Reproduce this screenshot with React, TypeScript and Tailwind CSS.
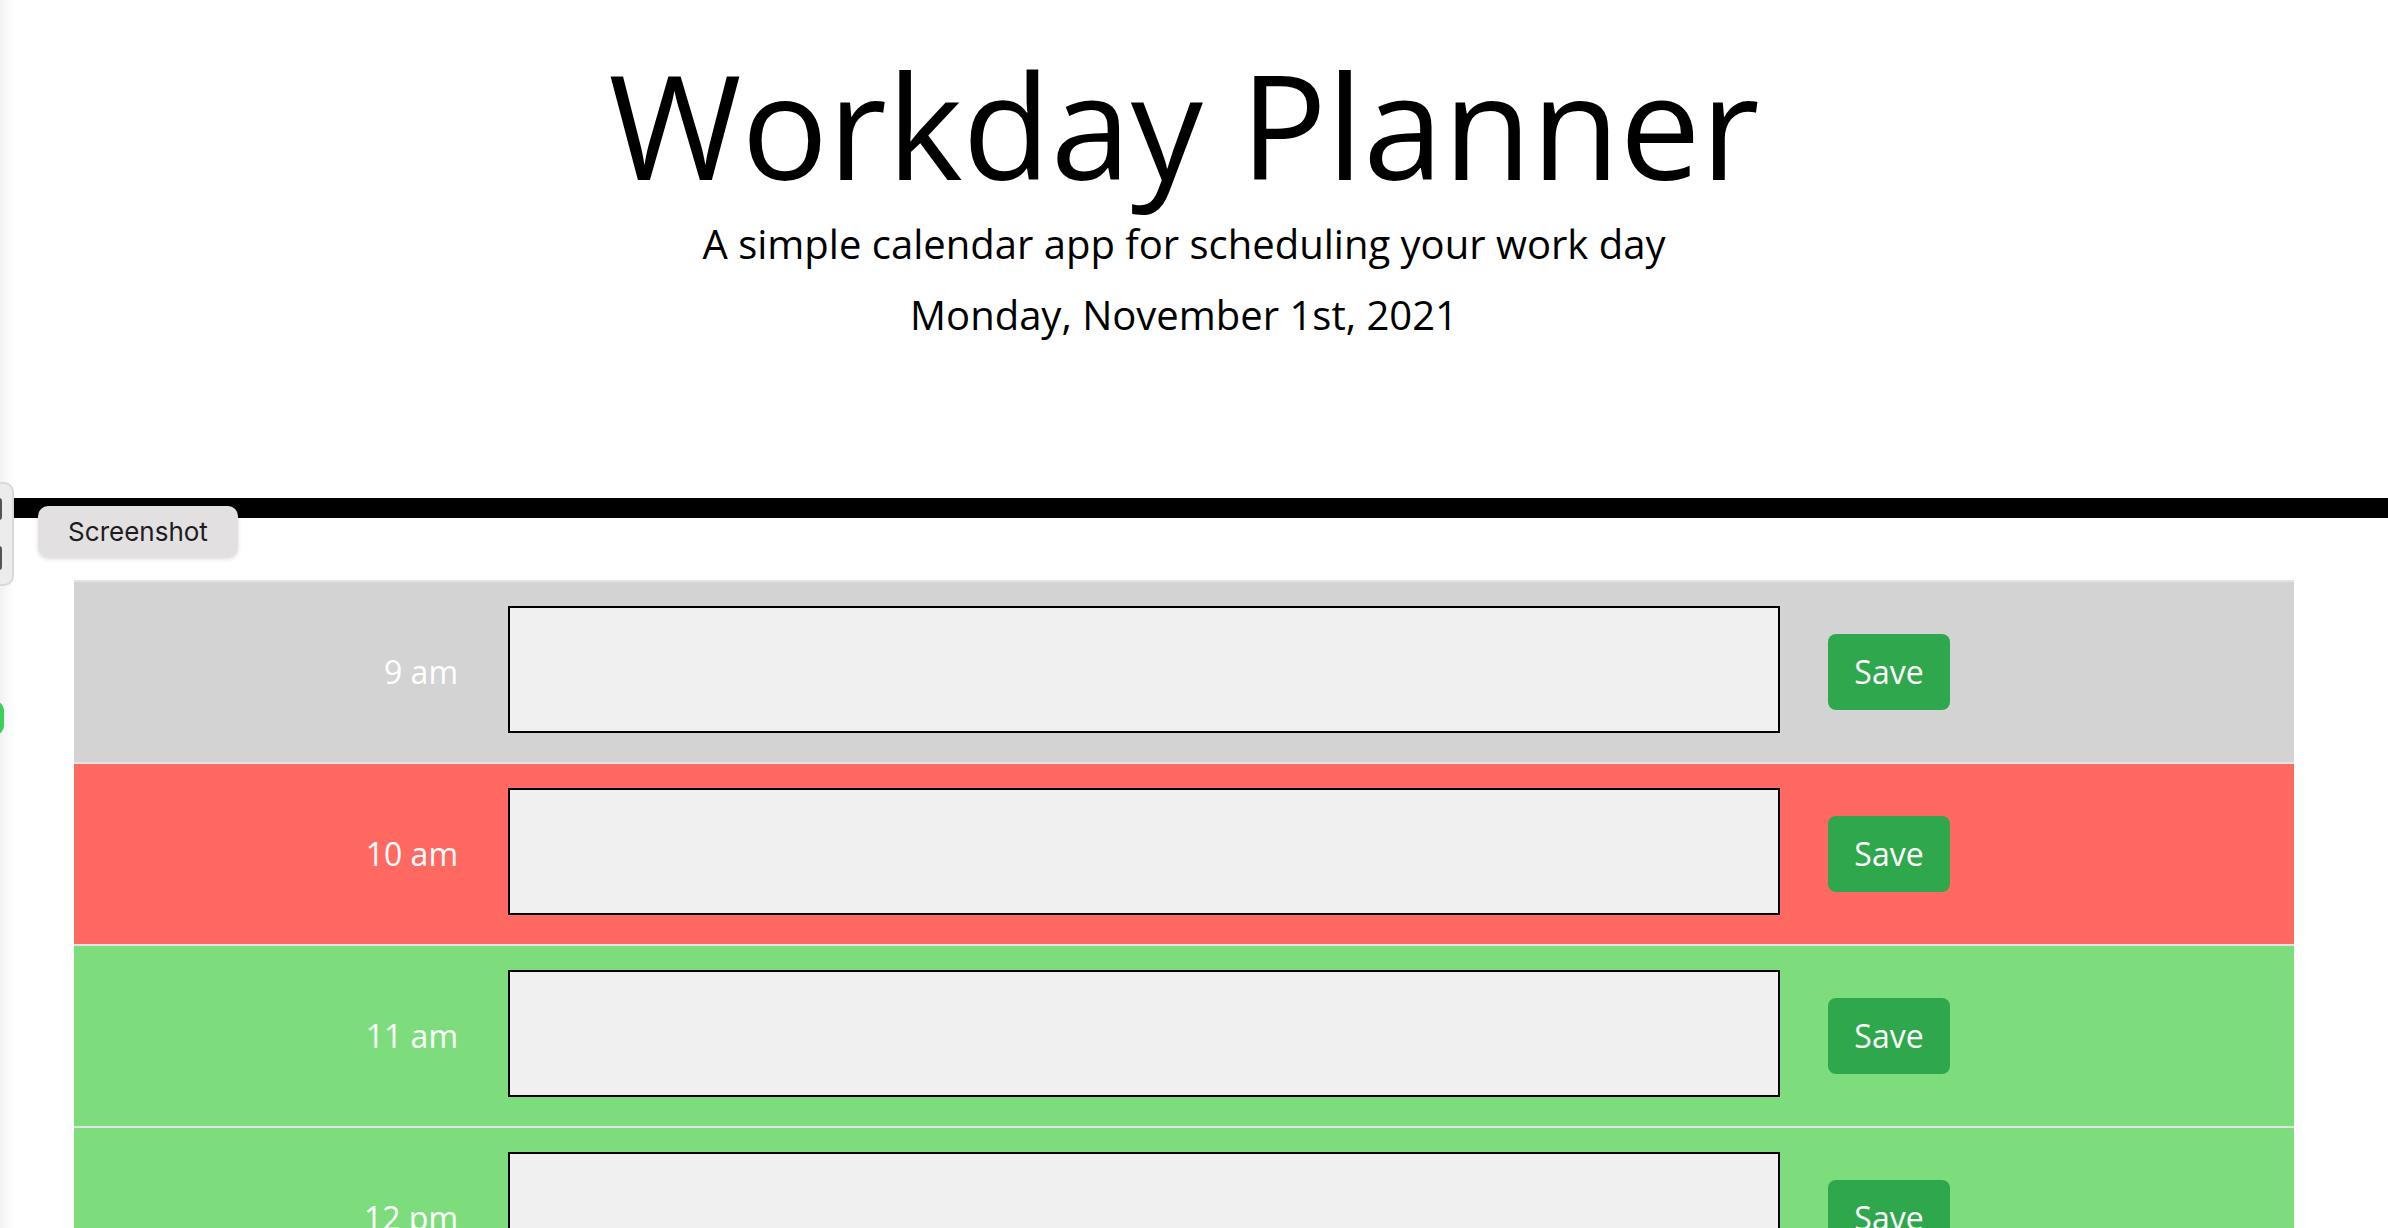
import React from "react";

type Slot = { label: string; state: "past" | "present" | "future" };

const slots: Slot[] = [
  { label: "9 am", state: "past" },
  { label: "10 am", state: "present" },
  { label: "11 am", state: "future" },
  { label: "12 pm", state: "future" },
  { label: "1 pm", state: "future" },
  { label: "2 pm", state: "future" },
  { label: "3 pm", state: "future" },
  { label: "4 pm", state: "future" },
  { label: "5 pm", state: "future" },
];

const rowBg: Record<Slot["state"], string> = {
  past: "bg-[#d3d3d3]",
  present: "bg-[#ff6961]",
  future: "bg-[#7ddd7d]",
};

function HourRow({ slot }: { slot: Slot }) {
  return (
    <div className={`flex h-[182px] border-t-2 border-[#e1e4e7] ${rowBg[slot.state]}`}>
      <div className="w-[384px] shrink-0 flex items-center justify-end text-[32px] leading-none text-white">
        {slot.label}
      </div>
      <textarea className="ml-[50px] mt-[24px] w-[1272px] h-[127px] shrink-0 resize-none border-2 border-black bg-[#f0f0f0] outline-none" />
      <div className="ml-[48px] flex items-center">
        <button
          type="button"
          className="w-[122px] h-[76px] rounded-[8px] bg-[#2fa74c] text-white text-[32px] leading-none"
        >
          Save
        </button>
      </div>
    </div>
  );
}

export default function App() {
  return (
    <div
      className="relative min-h-screen bg-white text-black overflow-hidden"
      style={{ fontFamily: '"Open Sans", "Liberation Sans", sans-serif' }}
    >
      {/* capture tool edge */}
      <div className="absolute left-0 top-0 h-full w-[14px] bg-gradient-to-r from-[#f2f2f2] to-white z-10" />
      <div className="absolute left-[-20px] top-[482px] w-[34px] h-[104px] rounded-[10px] border-2 border-[#d8d8d8] bg-[#ececec] z-20">
        <div className="absolute right-[10px] top-[14px] w-[6px] h-[22px] rounded-[3px] bg-[#555]" />
        <div className="absolute right-[10px] top-[62px] w-[6px] h-[24px] rounded-[3px] bg-[#555]" />
      </div>
      <div className="absolute left-[-18px] top-[700px] w-[22px] h-[36px] rounded-full bg-[#3ccf5a] z-20" />

      <header className="h-[498px] pr-[20px] flex flex-col items-center">
        <h1 className="pt-[52px] text-[144px] leading-none font-normal">Workday Planner</h1>
        <p className="mt-[24px] text-[40px] leading-[48px]">
          A simple calendar app for scheduling your work day
        </p>
        <p className="mt-[23px] text-[40px] leading-[48px]">Monday, November 1st, 2021</p>
      </header>
      <div className="h-[20px] bg-black" />

      <button
        type="button"
        className="absolute left-[38px] top-[506px] w-[200px] h-[51px] rounded-[10px] bg-[#e3e0e1] shadow-[0_2px_4px_rgba(0,0,0,0.15)] text-[26px] text-[#1d1d1f] z-20"
        style={{ fontFamily: 'Inter, "Liberation Sans", sans-serif' }}
      >
        Screenshot
      </button>

      <main className="pr-[20px]">
        <div className="mx-[74px] mt-[62px]">
          {slots.map((s) => (
            <HourRow key={s.label} slot={s} />
          ))}
        </div>
      </main>
    </div>
  );
}
